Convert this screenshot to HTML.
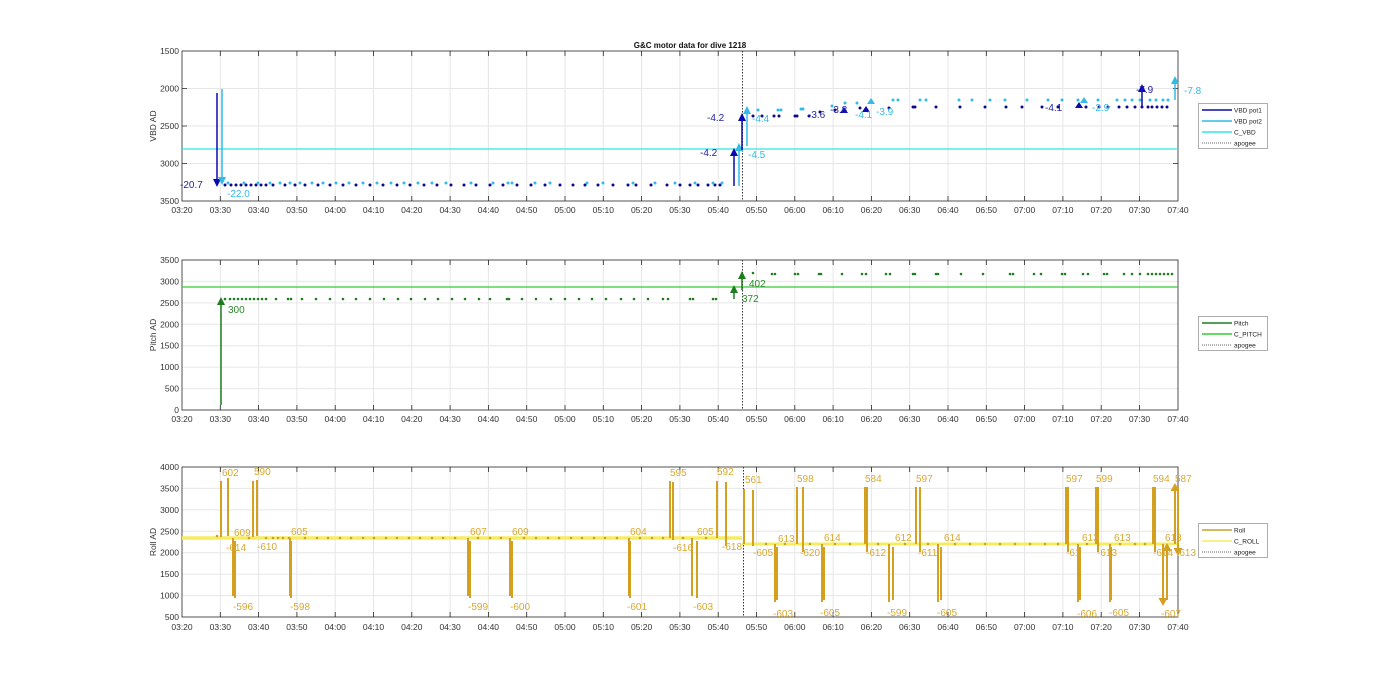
<!DOCTYPE html>
<html><head><meta charset="utf-8"><style>
html,body{margin:0;padding:0;background:#fff;}
svg{display:block;font-family:"Liberation Sans",Arial,sans-serif;}
.t{font-size:8.5px;fill:#333;}
.g{stroke:#e6e6e6;stroke-width:1;fill:none}
.ax{stroke:#262626;stroke-width:0.8;fill:none}
</style></head><body>
<svg width="1400" height="693" viewBox="0 0 1400 693" xmlns="http://www.w3.org/2000/svg">
<defs>
<path id="xg" d="M220.3 0V150M258.6 0V150M296.9 0V150M335.2 0V150M373.5 0V150M411.8 0V150M450.1 0V150M488.4 0V150M526.7 0V150M565 0V150M603.3 0V150M641.6 0V150M679.9 0V150M718.2 0V150M756.5 0V150M794.8 0V150M833.1 0V150M871.4 0V150M909.7 0V150M948 0V150M986.3 0V150M1024.6 0V150M1062.9 0V150M1101.2 0V150M1139.5 0V150"/>
<path id="xt" d="M220.3 150v-5M258.6 150v-5M296.9 150v-5M335.2 150v-5M373.5 150v-5M411.8 150v-5M450.1 150v-5M488.4 150v-5M526.7 150v-5M565 150v-5M603.3 150v-5M641.6 150v-5M679.9 150v-5M718.2 150v-5M756.5 150v-5M794.8 150v-5M833.1 150v-5M871.4 150v-5M909.7 150v-5M948 150v-5M986.3 150v-5M1024.6 150v-5M1062.9 150v-5M1101.2 150v-5M1139.5 150v-5M220.3 0v5M258.6 0v5M296.9 0v5M335.2 0v5M373.5 0v5M411.8 0v5M450.1 0v5M488.4 0v5M526.7 0v5M565 0v5M603.3 0v5M641.6 0v5M679.9 0v5M718.2 0v5M756.5 0v5M794.8 0v5M833.1 0v5M871.4 0v5M909.7 0v5M948 0v5M986.3 0v5M1024.6 0v5M1062.9 0v5M1101.2 0v5M1139.5 0v5"/>
<marker id="ab" markerWidth="8" markerHeight="8" refX="4" refY="4" orient="auto" markerUnits="userSpaceOnUse"><path d="M0 0L8 4L0 8z" fill="#0a0ab0"/></marker>
<marker id="al" markerWidth="8" markerHeight="8" refX="4" refY="4" orient="auto" markerUnits="userSpaceOnUse"><path d="M0 0L8 4L0 8z" fill="#33bbe8"/></marker>
<marker id="ag" markerWidth="8" markerHeight="8" refX="4" refY="4" orient="auto" markerUnits="userSpaceOnUse"><path d="M0 0L8 4L0 8z" fill="#1e7d1e"/></marker>
<marker id="ay" markerWidth="8" markerHeight="9" refX="4" refY="4.5" orient="auto" markerUnits="userSpaceOnUse"><path d="M0 0L8 4.5L0 9z" fill="#d4a020"/></marker>
</defs>

<text x="690" y="48" text-anchor="middle" style="font-size:8px;font-weight:bold;fill:#111">G&amp;C motor data for dive 1218</text>

<!-- ===== Plot 1 ===== -->
<g transform="translate(0,51)">
<use href="#xg" class="g"/>
<path class="g" d="M182 37.5H1178M182 75H1178M182 112.5H1178"/>
<use href="#xt" class="ax"/>
<rect x="182" y="0" width="996" height="150" class="ax"/>
<path class="ax" d="M182 37.5h5M182 75h5M182 112.5h5M1178 37.5h-5M1178 75h-5M1178 112.5h-5"/>
</g>
<line x1="182" y1="149" x2="1178" y2="149" stroke="#2ee6e6" stroke-width="1.3"/>
<line x1="742.5" y1="51" x2="742.5" y2="201" stroke="#333" stroke-width="1" stroke-dasharray="1.5,1.5"/>
<path d="M225 185h0M231 185h0M236 185h0M241 185h0M246 185h0M251 185h0M256 185h0M261 185h0M266 185h0M273 185h0M285 185h0M295 185h0M305 185h0M318 185h0M330 185h0M343 185h0M356 185h0M370 185h0M383 185h0M397 185h0M410 185h0M424 185h0M437 185h0M451 185h0M464 185h0M476 185h0M490 185h0M503 185h0M517 185h0M531 185h0M545 185h0M560 185h0M573 185h0M585 185h0M598 185h0M613 185h0M628 185h0M636 185h0M651 185h0M667 185h0M680 185h0M690 185h0M698 185h0M708 185h0M715 185h0M720 185h0M753 116h0M762 116h0M774 116h0M779 116h0M795 116h0M797 116h0M809 116h0M820 112h0M835 110h0M860 108h0M889 108h0M913 107h0M915 107h0M936 107h0M960 107h0M985 107h0M1006 107h0M1022 107h0M1042 107h0M1058 107h0M1086 107h0M1099 107h0M1108 107h0M1119 107h0M1127 107h0M1135 107h0M1142 107h0M1148 107h0M1152 107h0M1157 107h0M1162 107h0M1167 107h0" stroke="#0a0a8c" stroke-width="3" stroke-linecap="round"/>
<path d="M228 183h0M244 183h0M258 183h0M270 183h0M280 183h0M290 183h0M300 183h0M312 183h0M323 183h0M336 183h0M349 183h0M363 183h0M377 183h0M391 183h0M404 183h0M418 183h0M432 183h0M446 183h0M471 183h0M493 183h0M508 183h0M512 183h0M535 183h0M550 183h0M587 183h0M603 183h0M633 183h0M655 183h0M675 183h0M695 183h0M713 183h0M722 183h0M758 110h0M778 110h0M781 110h0M801 109h0M803 109h0M832 106h0M845 103h0M857 103h0M893 100h0M898 100h0M920 100h0M926 100h0M959 100h0M972 100h0M990 100h0M1005 100h0M1027 100h0M1048 100h0M1062 100h0M1078 100h0M1098 100h0M1117 100h0M1125 100h0M1132 100h0M1140 100h0M1150 100h0M1156 100h0M1163 100h0M1168 100h0" stroke="#33bbe8" stroke-width="3" stroke-linecap="round"/>
<line x1="217" y1="93" x2="217" y2="183" stroke="#0a0ab0" stroke-width="1.5" marker-end="url(#ab)"/>
<line x1="222" y1="89" x2="222" y2="181" stroke="#33bbe8" stroke-width="1.5" marker-end="url(#al)"/>
<line x1="734" y1="186" x2="734" y2="152" stroke="#0a0ab0" stroke-width="1.5" marker-end="url(#ab)"/>
<line x1="739" y1="186" x2="739" y2="147" stroke="#33bbe8" stroke-width="1.5" marker-end="url(#al)"/>
<line x1="742" y1="150" x2="742" y2="117" stroke="#0a0ab0" stroke-width="1.5" marker-end="url(#ab)"/>
<line x1="747" y1="146" x2="747" y2="110" stroke="#33bbe8" stroke-width="1.5" marker-end="url(#al)"/>
<line x1="1142" y1="108" x2="1142" y2="88" stroke="#0a0ab0" stroke-width="1.5" marker-end="url(#ab)"/>
<line x1="1175" y1="100" x2="1175" y2="80" stroke="#33bbe8" stroke-width="1.5" marker-end="url(#al)"/>
<path d="M840 113l4-6 4 6zM862 112l4-6 4 6zM1075 108l4-6 4 6z" fill="#0a0ab0"/>
<path d="M867 104l4-6 4 6zM1080 103l4-6 4 6z" fill="#33bbe8"/>
<g style="font-size:10px">
<text x="180" y="188" fill="#2222aa">-20.7</text><text x="227" y="197" fill="#33bbe8">-22.0</text>
<text x="700" y="156" fill="#2222aa">-4.2</text><text x="707" y="121" fill="#2222aa">-4.2</text>
<text x="748" y="158" fill="#33bbe8">-4.5</text><text x="752" y="122" fill="#33bbe8">-4.4</text>
<text x="808" y="118" fill="#2222aa">-3.6</text><text x="830" y="113" fill="#2222aa">-3.8</text>
<text x="855" y="118" fill="#33bbe8">-4.1</text><text x="876" y="115" fill="#33bbe8">-3.9</text>
<text x="1045" y="111" fill="#2222aa">-4.1</text><text x="1092" y="111" fill="#33bbe8">-2.9</text>
<text x="1136" y="93" fill="#2222aa">-7.9</text><text x="1184" y="94" fill="#33bbe8">-7.8</text>
</g>
<g class="t" text-anchor="end"><text x="179" y="54">1500</text><text x="179" y="91.5">2000</text><text x="179" y="129">2500</text><text x="179" y="166.5">3000</text><text x="179" y="204">3500</text></g>
<text transform="translate(156,126) rotate(-90)" text-anchor="middle" class="t">VBD AD</text>
<g class="t" text-anchor="middle"><text x="182" y="213">03:20</text><text x="220.3" y="213">03:30</text><text x="258.6" y="213">03:40</text><text x="296.9" y="213">03:50</text><text x="335.2" y="213">04:00</text><text x="373.5" y="213">04:10</text><text x="411.8" y="213">04:20</text><text x="450.1" y="213">04:30</text><text x="488.4" y="213">04:40</text><text x="526.7" y="213">04:50</text><text x="565" y="213">05:00</text><text x="603.3" y="213">05:10</text><text x="641.6" y="213">05:20</text><text x="679.9" y="213">05:30</text><text x="718.2" y="213">05:40</text><text x="756.5" y="213">05:50</text><text x="794.8" y="213">06:00</text><text x="833.1" y="213">06:10</text><text x="871.4" y="213">06:20</text><text x="909.7" y="213">06:30</text><text x="948" y="213">06:40</text><text x="986.3" y="213">06:50</text><text x="1024.6" y="213">07:00</text><text x="1062.9" y="213">07:10</text><text x="1101.2" y="213">07:20</text><text x="1139.5" y="213">07:30</text><text x="1178" y="213">07:40</text></g>
<g style="font-size:6.5px" fill="#222">
<rect x="1198.5" y="103.5" width="69" height="45" fill="#fff" stroke="#999" stroke-width="0.8"/>
<line x1="1202" y1="110" x2="1232" y2="110" stroke="#0a0ab0" stroke-width="1.5"/><text x="1234" y="112.5">VBD pot1</text>
<line x1="1202" y1="121" x2="1232" y2="121" stroke="#33bbe8" stroke-width="1.5"/><text x="1234" y="123.5">VBD pot2</text>
<line x1="1202" y1="132" x2="1232" y2="132" stroke="#2ee6e6" stroke-width="1.5"/><text x="1234" y="134.5">C_VBD</text>
<line x1="1202" y1="143" x2="1232" y2="143" stroke="#333" stroke-width="0.8" stroke-dasharray="1,1"/><text x="1234" y="145.5">apogee</text>
</g>

<!-- ===== Plot 2 ===== -->
<g transform="translate(0,260)">
<use href="#xg" class="g"/>
<path class="g" d="M182 21.4H1178M182 42.9H1178M182 64.3H1178M182 85.7H1178M182 107.1H1178M182 128.6H1178"/>
<use href="#xt" class="ax"/>
<rect x="182" y="0" width="996" height="150" class="ax"/>
</g>
<line x1="182" y1="287" x2="1178" y2="287" stroke="#33cc33" stroke-width="1.2"/>
<line x1="742.5" y1="260" x2="742.5" y2="410" stroke="#333" stroke-width="1" stroke-dasharray="1.5,1.5"/>
<path d="M225 299h0M230 299h0M234 299h0M238 299h0M242 299h0M246 299h0M250 299h0M254 299h0M258 299h0M262 299h0M266 299h0M276 299h0M288 299h0M291 299h0M302 299h0M316 299h0M330 299h0M343 299h0M356 299h0M370 299h0M384 299h0M398 299h0M411 299h0M425 299h0M438 299h0M452 299h0M465 299h0M479 299h0M490 299h0M507 299h0M509 299h0M522 299h0M536 299h0M551 299h0M565 299h0M579 299h0M592 299h0M606 299h0M621 299h0M634 299h0M648 299h0M663 299h0M668 299h0M690 299h0M693 299h0M713 299h0M716 299h0M753 273h0M772 274h0M775 274h0M795 274h0M798 274h0M819 274h0M821 274h0M842 274h0M862 274h0M866 274h0M886 274h0M890 274h0M913 274h0M915 274h0M936 274h0M938 274h0M961 274h0M983 274h0M1010 274h0M1013 274h0M1034 274h0M1041 274h0M1062 274h0M1065 274h0M1083 274h0M1088 274h0M1104 274h0M1107 274h0M1124 274h0M1132 274h0M1140 274h0M1148 274h0M1152 274h0M1156 274h0M1160 274h0M1164 274h0M1168 274h0M1172 274h0" stroke="#1e7d1e" stroke-width="2.6" stroke-linecap="round"/>
<line x1="221" y1="405" x2="221" y2="301" stroke="#1e7d1e" stroke-width="1.5" marker-end="url(#ag)"/>
<line x1="734" y1="299" x2="734" y2="289" stroke="#1e7d1e" stroke-width="1.5" marker-end="url(#ag)"/>
<line x1="742" y1="290" x2="742" y2="275" stroke="#1e7d1e" stroke-width="1.5" marker-end="url(#ag)"/>
<g style="font-size:10px" fill="#2a8a2a"><text x="228" y="313">300</text><text x="742" y="302">372</text><text x="749" y="287">402</text></g>
<g class="t" text-anchor="end"><text x="179" y="263">3500</text><text x="179" y="284.4">3000</text><text x="179" y="305.9">2500</text><text x="179" y="327.3">2000</text><text x="179" y="348.7">1500</text><text x="179" y="370.1">1000</text><text x="179" y="391.6">500</text><text x="179" y="413">0</text></g>
<text transform="translate(156,335) rotate(-90)" text-anchor="middle" class="t">Pitch AD</text>
<g class="t" text-anchor="middle"><text x="182" y="422">03:20</text><text x="220.3" y="422">03:30</text><text x="258.6" y="422">03:40</text><text x="296.9" y="422">03:50</text><text x="335.2" y="422">04:00</text><text x="373.5" y="422">04:10</text><text x="411.8" y="422">04:20</text><text x="450.1" y="422">04:30</text><text x="488.4" y="422">04:40</text><text x="526.7" y="422">04:50</text><text x="565" y="422">05:00</text><text x="603.3" y="422">05:10</text><text x="641.6" y="422">05:20</text><text x="679.9" y="422">05:30</text><text x="718.2" y="422">05:40</text><text x="756.5" y="422">05:50</text><text x="794.8" y="422">06:00</text><text x="833.1" y="422">06:10</text><text x="871.4" y="422">06:20</text><text x="909.7" y="422">06:30</text><text x="948" y="422">06:40</text><text x="986.3" y="422">06:50</text><text x="1024.6" y="422">07:00</text><text x="1062.9" y="422">07:10</text><text x="1101.2" y="422">07:20</text><text x="1139.5" y="422">07:30</text><text x="1178" y="422">07:40</text></g>
<g style="font-size:6.5px" fill="#222">
<rect x="1198.5" y="316.5" width="69" height="34" fill="#fff" stroke="#999" stroke-width="0.8"/>
<line x1="1202" y1="323" x2="1232" y2="323" stroke="#1e7d1e" stroke-width="1.5"/><text x="1234" y="325.5">Pitch</text>
<line x1="1202" y1="334" x2="1232" y2="334" stroke="#33cc33" stroke-width="1.5"/><text x="1234" y="336.5">C_PITCH</text>
<line x1="1202" y1="345" x2="1232" y2="345" stroke="#333" stroke-width="0.8" stroke-dasharray="1,1"/><text x="1234" y="347.5">apogee</text>
</g>

<!-- ===== Plot 3 ===== -->
<g transform="translate(0,467)">
<use href="#xg" class="g"/>
<path class="g" d="M182 21.4H1178M182 42.9H1178M182 64.3H1178M182 85.7H1178M182 107.1H1178M182 128.6H1178"/>
<use href="#xt" class="ax"/>
<rect x="182" y="0" width="996" height="150" class="ax"/>
</g>
<line x1="182" y1="538" x2="742" y2="538" stroke="#f5ec60" stroke-width="3.5"/>
<line x1="742" y1="544" x2="1178" y2="544" stroke="#f5ec60" stroke-width="3"/>
<line x1="743.5" y1="467" x2="743.5" y2="617" stroke="#333" stroke-width="1" stroke-dasharray="1.5,1.5"/>
<path d="M217 536h0M249 538h0M266 538h0M273 538h0M278 538h0M283 538h0M289 538h0M305 538h0M317 538h0M328 538h0M340 538h0M351 538h0M363 538h0M374 538h0M386 538h0M397 538h0M409 538h0M420 538h0M432 538h0M443 538h0M455 538h0M478 538h0M490 538h0M501 538h0M524 538h0M536 538h0M548 538h0M559 538h0M571 538h0M582 538h0M594 538h0M605 538h0M617 538h0M640 538h0M652 538h0M663 538h0M683 538h0M706 538h0M766 544h0M785 544h0M810 544h0M835 544h0M850 544h0M878 544h0M905 544h0M928 544h0M955 544h0M970 544h0M985 544h0M1000 544h0M1015 544h0M1030 544h0M1045 544h0M1058 544h0M1087 544h0M1120 544h0M1135 544h0M1145 544h0" stroke="#c9a028" stroke-width="2.5" stroke-linecap="round"/>
<g stroke="#d4a020" stroke-width="2" fill="none">
<path d="M221 537V481M253 537V481M670 538V481M717 538V481M744 544V489M797 544V487M865 544V487M916 544V487M1066 544V487M1096 544V487M1153 544V487M1175 544V487" marker-end="url(#ay)"/>
<path d="M228 478V536M257 480V536M673 482V540M726 482V546M753 490V546M803 487V552M867 487V552M920 487V552M1068 487V552M1098 487V552M1155 487V552M1178 487V552" marker-end="url(#ay)"/>
<path d="M233 538V596M290 538V596M468 538V596M510 538V596M629 538V596M692 538V596M775 544V602M822 544V602M889 544V602M938 544V602M1078 544V602M1110 544V602M1163 544V602" marker-end="url(#ay)"/>
<path d="M235 598V541M291 598V541M470 598V541M512 598V541M630 598V541M697 598V541M777 600V547M824 600V547M893 600V547M941 600V547M1080 600V547M1111 600V547M1167 600V547" marker-end="url(#ay)"/>
</g>
<g style="font-size:10px" fill="#d9a830">
<text x="222" y="476">602</text><text x="254" y="475">590</text><text x="670" y="476">595</text><text x="717" y="475">592</text><text x="745" y="483">561</text><text x="797" y="482">598</text><text x="865" y="482">584</text><text x="916" y="482">597</text><text x="1066" y="482">597</text><text x="1096" y="482">599</text><text x="1153" y="482">594</text><text x="1175" y="482">587</text>
<text x="234" y="536">609</text><text x="291" y="535">605</text><text x="470" y="535">607</text><text x="512" y="535">609</text><text x="630" y="535">604</text><text x="697" y="535">605</text><text x="778" y="542">613</text><text x="824" y="541">614</text><text x="895" y="541">612</text><text x="944" y="541">614</text><text x="1082" y="541">613</text><text x="1114" y="541">613</text><text x="1165" y="541">613</text>
<text x="226" y="551">-614</text><text x="257" y="550">-610</text><text x="673" y="551">-616</text><text x="722" y="550">-618</text><text x="753" y="556">-605</text><text x="800" y="556">-620</text><text x="866" y="556">-612</text><text x="918" y="556">-611</text><text x="1066" y="556">-61</text><text x="1097" y="556">-613</text><text x="1153" y="556">-614</text><text x="1176" y="556">-613</text>
<text x="233" y="610">-596</text><text x="290" y="610">-598</text><text x="468" y="610">-599</text><text x="510" y="610">-600</text><text x="627" y="610">-601</text><text x="693" y="610">-603</text><text x="773" y="617">-603</text><text x="820" y="616">-605</text><text x="887" y="616">-599</text><text x="937" y="616">-605</text><text x="1077" y="617">-606</text><text x="1109" y="616">-605</text><text x="1161" y="617">-607</text>
</g>
<g class="t" text-anchor="end"><text x="179" y="470">4000</text><text x="179" y="491.4">3500</text><text x="179" y="512.9">3000</text><text x="179" y="534.3">2500</text><text x="179" y="555.7">2000</text><text x="179" y="577.1">1500</text><text x="179" y="598.6">1000</text><text x="179" y="620">500</text></g>
<text transform="translate(156,542) rotate(-90)" text-anchor="middle" class="t">Roll AD</text>
<g class="t" text-anchor="middle"><text x="182" y="630">03:20</text><text x="220.3" y="630">03:30</text><text x="258.6" y="630">03:40</text><text x="296.9" y="630">03:50</text><text x="335.2" y="630">04:00</text><text x="373.5" y="630">04:10</text><text x="411.8" y="630">04:20</text><text x="450.1" y="630">04:30</text><text x="488.4" y="630">04:40</text><text x="526.7" y="630">04:50</text><text x="565" y="630">05:00</text><text x="603.3" y="630">05:10</text><text x="641.6" y="630">05:20</text><text x="679.9" y="630">05:30</text><text x="718.2" y="630">05:40</text><text x="756.5" y="630">05:50</text><text x="794.8" y="630">06:00</text><text x="833.1" y="630">06:10</text><text x="871.4" y="630">06:20</text><text x="909.7" y="630">06:30</text><text x="948" y="630">06:40</text><text x="986.3" y="630">06:50</text><text x="1024.6" y="630">07:00</text><text x="1062.9" y="630">07:10</text><text x="1101.2" y="630">07:20</text><text x="1139.5" y="630">07:30</text><text x="1178" y="630">07:40</text></g>
<g style="font-size:6.5px" fill="#222">
<rect x="1198.5" y="523.5" width="69" height="34" fill="#fff" stroke="#999" stroke-width="0.8"/>
<line x1="1202" y1="530" x2="1232" y2="530" stroke="#c9a028" stroke-width="1.5"/><text x="1234" y="532.5">Roll</text>
<line x1="1202" y1="541" x2="1232" y2="541" stroke="#f5ec60" stroke-width="1.5"/><text x="1234" y="543.5">C_ROLL</text>
<line x1="1202" y1="552" x2="1232" y2="552" stroke="#333" stroke-width="0.8" stroke-dasharray="1,1"/><text x="1234" y="554.5">apogee</text>
</g>
</svg>
</body></html>
